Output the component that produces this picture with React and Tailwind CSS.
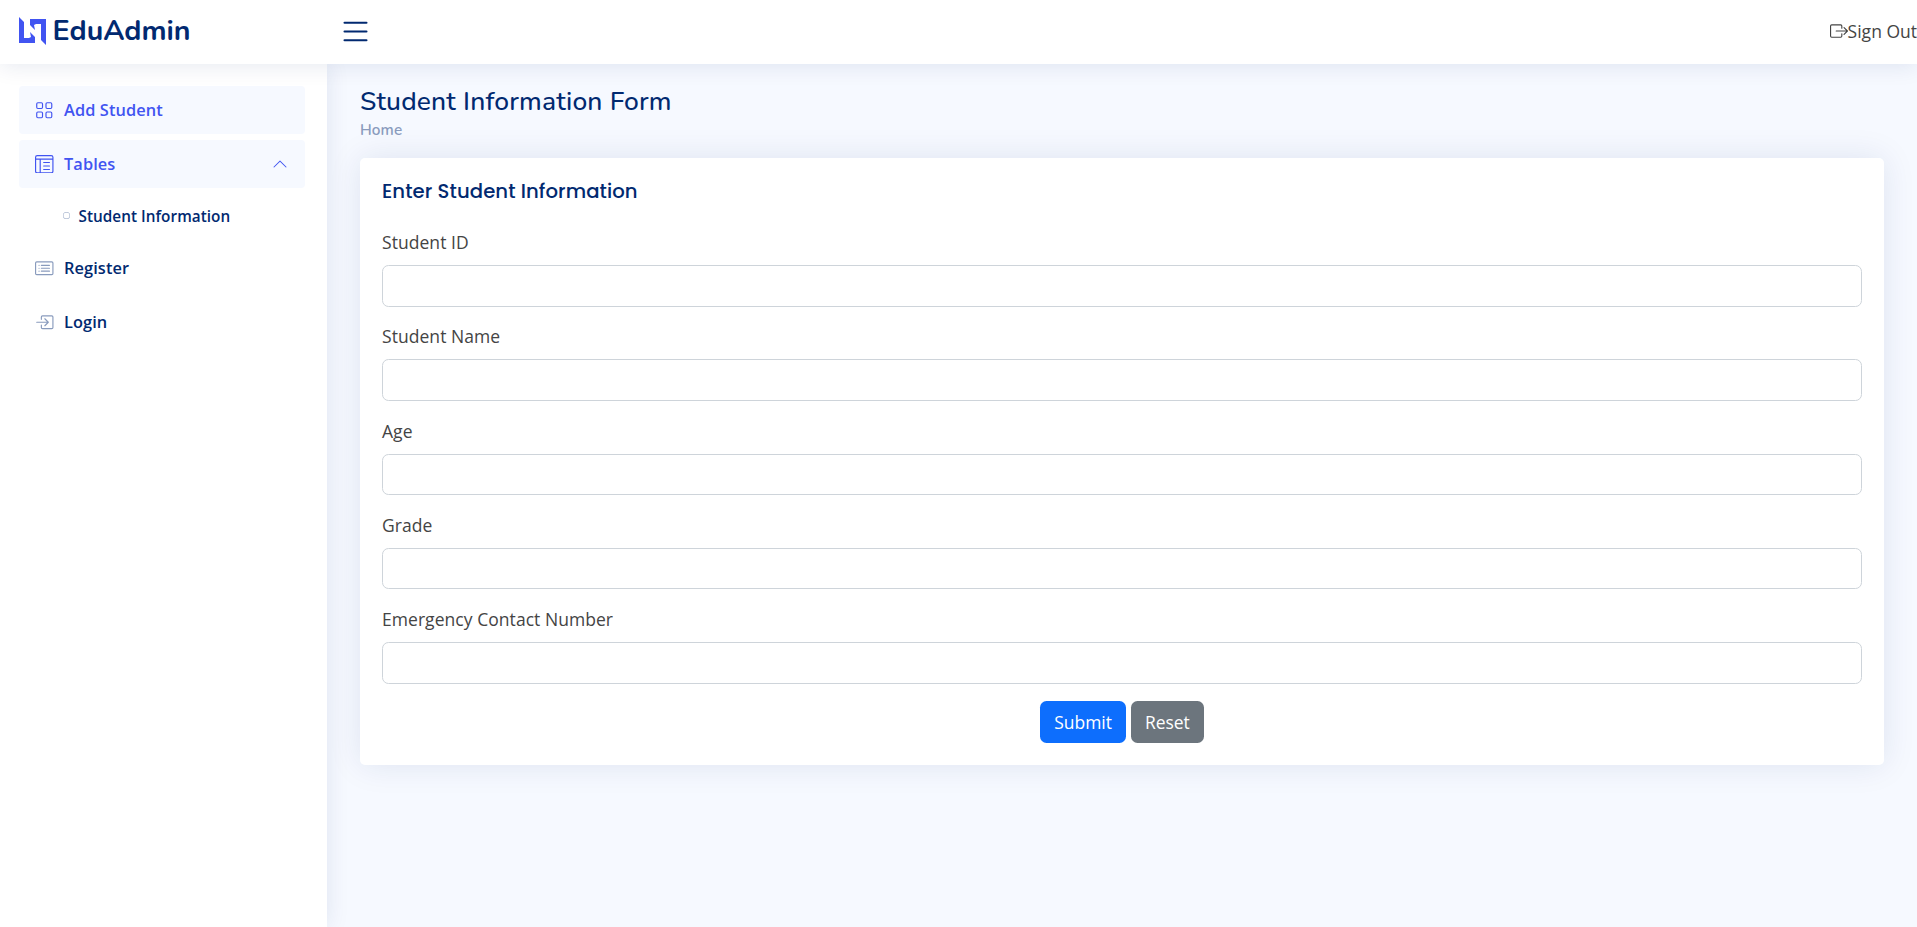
import {
  BsGrid,
  BsLayoutTextWindowReverse,
  BsCardList,
  BsBoxArrowInRight,
  BsBoxArrowRight,
  BsChevronUp,
  BsCircle,
  BsList,
} from 'react-icons/bs';

const fields = ['Student ID', 'Student Name', 'Age', 'Grade', 'Emergency Contact Number'];

function Logo() {
  return (
    <svg width="28" height="28" viewBox="0 0 28 28" fill="#4154f1" className="shrink-0">
      <path d="M0 0 L5 5 V21 H10 L12 20 L11 15 L16 20 V26 H0 Z" />
      <path d="M11 2 H27 V28 L22 23 V7 H17 L15 8 L16 13 L11 8 Z" />
    </svg>
  );
}

function Header() {
  return (
    <header className="relative z-20 flex h-16 shrink-0 items-center bg-white pb-0.5 pl-[19px] shadow-[0_2px_22px_rgba(1,41,112,0.1)]">
      <div className="flex w-[324px] items-center">
        <Logo />
        <span className="ml-[5.5px] pt-px font-['Nunito','Lato',sans-serif] text-[28.6px] font-bold leading-none text-[#012970]">
          EduAdmin
        </span>
      </div>
      <BsList size={35} color="#012970" className="-ml-[5px]" />
      <a className="ml-auto flex items-center text-[17.5px] text-[#444444]">
        <BsBoxArrowRight size={18} />
        Sign Out
      </a>
    </header>
  );
}

function NavItem({ icon: Icon, label, active, open }) {
  return (
    <a
      className={
        active
          ? 'flex h-12 items-center rounded bg-[#f6f9ff] pl-4 pr-[17px] text-[16.35px] font-semibold tracking-[0.1px] text-[#4154f1]'
          : 'flex h-12 items-center rounded pl-4 pr-[17px] text-[16.35px] font-semibold tracking-[0.1px] text-[#012970]'
      }
    >
      <Icon size={18.5} color={active ? '#4154f1' : '#899bbd'} className="mr-[10.5px]" />
      {label}
      {open && <BsChevronUp size={16} className="ml-auto" />}
    </a>
  );
}

function Sidebar() {
  return (
    <aside className="relative z-10 flex w-[327px] shrink-0 flex-col bg-white pl-[19px] pr-[22px] pt-[22px] shadow-[0_0_22px_rgba(1,41,112,0.1)]">
      <NavItem icon={BsGrid} label="Add Student" active />
      <div className="h-1.5" />
      <NavItem icon={BsLayoutTextWindowReverse} label="Tables" active open />
      <a className="flex h-14 items-center pl-[44px] text-[15.3px] font-semibold tracking-[0.04px] text-[#012970]">
        <BsCircle size={7} color="#899bbd" className="mb-0.5 mr-[8.5px]" />
        Student Information
      </a>
      <NavItem icon={BsCardList} label="Register" />
      <div className="h-1.5" />
      <NavItem icon={BsBoxArrowInRight} label="Login" />
    </aside>
  );
}

function Field({ label }) {
  return (
    <label className="flex h-[94.25px] flex-col">
      <span className="mb-[10px] text-[17.5px] leading-[25px] tracking-[0.05px] text-[#444444]">{label}</span>
      <input className="h-[41.5px] w-full rounded-[6.5px] border border-[#ced4da] bg-white px-3 outline-none" />
    </label>
  );
}

export default function App() {
  return (
    <div className="flex h-[927px] w-full flex-col overflow-hidden bg-[#f6f9ff] font-['Open_Sans',sans-serif]">
      <Header />
      <div className="flex min-h-0 flex-1">
        <Sidebar />
        <main className="flex-1 pl-[33px] pr-[33px] pt-[22px]">
          <h1 className="h-[31px] font-['Nunito','Lato',sans-serif] text-[26.4px] font-medium leading-[31px] tracking-[0.18px] text-[#012970]">
            Student Information Form
          </h1>
          <nav className="h-[41px] pt-0.5 font-['Nunito','Lato',sans-serif] text-[15.3px] font-semibold leading-[23px] tracking-[0.1px] text-[#899bbd]">
            Home
          </nav>
          <section className="h-[607px] rounded-[5px] bg-white px-[22px] pt-[22px] shadow-[0_0_33px_rgba(1,41,112,0.1)]">
            <h5 className="h-[50px] font-['Poppins','Inter',sans-serif] text-[19.65px] font-medium leading-[22px] tracking-[0.08px] text-[#012970]">
              Enter Student Information
            </h5>
            <form>
              {fields.map((label) => (
                <Field key={label} label={label} />
              ))}
              <div className="flex justify-center gap-[5px]">
                <button type="button" className="h-[42px] rounded-[6.5px] bg-[#0d6efd] px-[14px] text-[17.45px] text-white">
                  Submit
                </button>
                <button type="button" className="h-[42px] rounded-[6.5px] bg-[#6c757d] px-[14px] text-[17.45px] text-white">
                  Reset
                </button>
              </div>
            </form>
          </section>
        </main>
      </div>
    </div>
  );
}
